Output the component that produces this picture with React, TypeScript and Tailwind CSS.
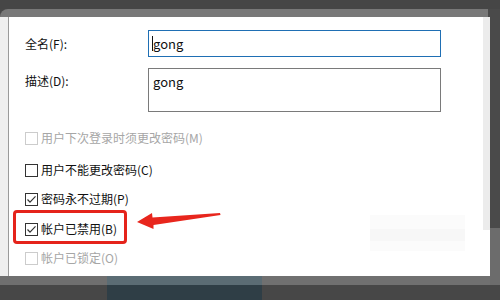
import React from "react";

const font = { fontFamily: '"Noto Sans CJK SC", "Noto Sans", sans-serif' };

function Box({ checked, disabled }: { checked?: boolean; disabled?: boolean }) {
  return (
    <span
      className={
        "flex h-[13px] w-[13px] shrink-0 items-center justify-center border bg-white " +
        (disabled ? "border-[#cccccc]" : "border-[#333333]")
      }
    >
      {checked && (
        <svg width="11" height="11" viewBox="0 0 11 11">
          <polyline points="1.5,5.5 4,8.2 9.5,2.3" fill="none" stroke="#333" strokeWidth="1.2" />
        </svg>
      )}
    </span>
  );
}

function Row({
  label,
  checked,
  disabled,
  className,
  children,
}: {
  label: string;
  checked?: boolean;
  disabled?: boolean;
  className?: string;
  children?: React.ReactNode;
}) {
  return (
    <div className={"relative flex h-[20px] items-center gap-[3px] " + (className ?? "")}>
      <Box checked={checked} disabled={disabled} />
      <span className={"text-[12px] leading-none " + (disabled ? "text-[#a6a6a6]" : "text-[#111111]")}>
        {label}
      </span>
      {children}
    </div>
  );
}

export default function App() {
  return (
    <div className="flex h-[300px] w-[500px] flex-col overflow-hidden bg-[#474747]" style={font}>
      <div className="h-[9px] shrink-0 bg-[#464646]" />
      <div className="flex h-[8px] shrink-0">
        <div className="w-[488px] rounded-tl-[10px] bg-[#787878]" />
        <div className="flex-1 bg-[#4a4a4a]" />
      </div>
      <div className="flex h-[259px] shrink-0">
        <div className="w-[8px] bg-[#efefef]" />
        <div className="w-[1px] bg-[#9a9a9a]" />
        <div className="relative flex w-[474px] flex-col bg-white pl-[16px] pt-[13px]">
          <div className="flex h-[27px] items-center">
            <span className="w-[123px] text-[12px] text-[#111111]">全名(F):</span>
            <div className="flex h-[27px] w-[293px] items-center border border-[#1f6fb4] pl-[3px] text-[13px] text-[#111111]">
              <span className="h-[15px] w-[1px] bg-[#111]" />
              gong
            </div>
          </div>
          <div className="mt-[11px] flex">
            <span className="w-[123px] pt-[4px] text-[12px] text-[#111111]">描述(D):</span>
            <div className="h-[44px] w-[293px] border border-[#7a7a7a] pl-[4px] pt-[3px] text-[13px] text-[#111111]">
              gong
            </div>
          </div>
          <div className="mt-[16px] flex flex-col">
            <Row label="用户下次登录时须更改密码(M)" disabled />
            <Row label="用户不能更改密码(C)" className="mt-[12px]" />
            <Row label="密码永不过期(P)" checked className="mt-[9px]" />
            <Row label="帐户已禁用(B)" checked className="mt-[10px]">
              <span className="absolute left-[-12px] top-[-9px] h-[34px] w-[114px] rounded-[4px] border-[3px] border-[#e5231b]" />
              <svg
                className="absolute left-[112px] top-[-6px]"
                width="86"
                height="20"
                viewBox="0 0 86 20"
              >
                <polygon
                  points="0,9 15,0 15.5,4.5 83,0 83.5,2 16.5,12 16.5,16"
                  fill="#e8261d"
                />
              </svg>
            </Row>
            <Row label="帐户已锁定(O)" disabled className="mt-[9px]" />
          </div>
          <div className="absolute left-[361px] top-[198px] h-[14px] w-[95px] bg-[#fbfbfb]" />
          <div className="absolute left-[361px] top-[212px] h-[12px] w-[95px] bg-[#f7f7f7]" />
          <div className="absolute left-[361px] top-[224px] h-[10px] w-[95px] bg-[#fbfbfb]" />
        </div>
        <div className="flex w-[7px] flex-col">
          <div className="h-[213px] bg-[#ececec]" />
          <div className="flex-1 bg-white" />
        </div>
        <div className="flex flex-1 flex-col">
          <div className="h-[211px] bg-[#4a4a4a]" />
          <div className="flex-1 bg-[#6c6c6c]" />
        </div>
      </div>
      <div className="flex h-[9px] shrink-0">
        <div className="w-[107px] bg-[#6f6f6f]" />
        <div className="w-[155px] bg-[#5b6c74]" />
        <div className="w-[228px] bg-[#707070]" />
        <div className="flex-1 bg-[#6c6c6c]" />
      </div>
      <div className="flex flex-1">
        <div className="w-[107px] bg-[#474747]" />
        <div className="w-[155px] bg-[#2f3e46]" />
        <div className="flex-1 bg-[#474747]" />
      </div>
    </div>
  );
}
